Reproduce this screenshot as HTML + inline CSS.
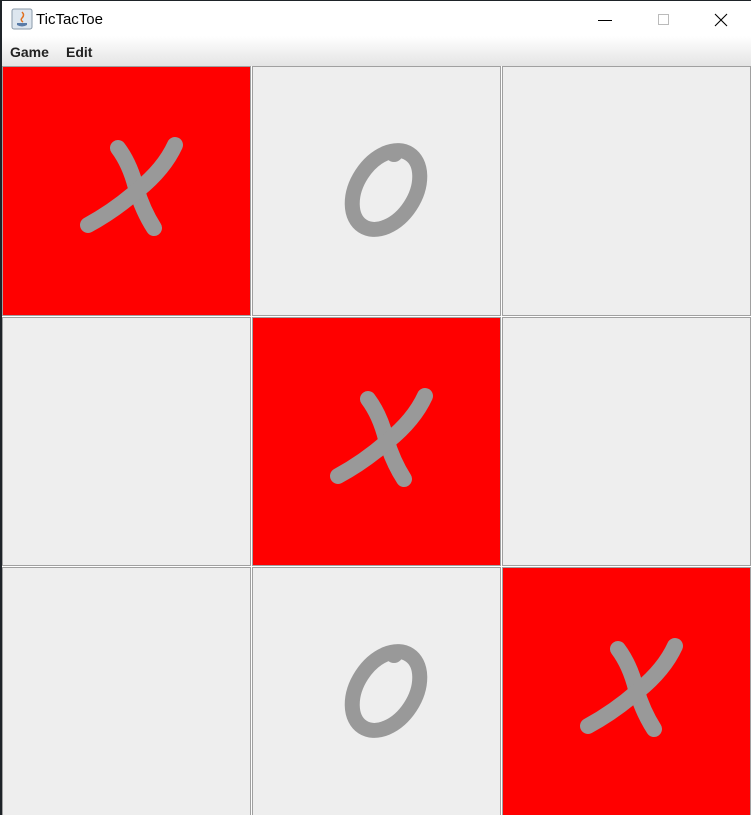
<!DOCTYPE html>
<html><head><meta charset="utf-8"><style>
html,body{margin:0;padding:0;width:751px;height:815px;overflow:hidden;background:#1e2328;font-family:"Liberation Sans",sans-serif}
#win{position:absolute;left:2px;top:1px;width:749px;height:814px;background:#fff}
#title{position:absolute;left:0;top:0;width:749px;height:35px;background:#fff}
#title .t{position:absolute;left:34px;top:10px;font-size:15px;color:#000}
#menu{position:absolute;left:0;top:35px;width:749px;height:30px;background:linear-gradient(#fff,#e4e4e4)}
#menu span{position:absolute;top:8px;font-size:14px;font-weight:bold;color:#222}
svg{position:absolute;left:0;top:0}
</style></head><body>
<div id="win">
<div id="title">
<svg width="24" height="24" style="left:9px;top:7px" viewBox="0 0 24 24"><rect x="1" y="1" width="20" height="20" rx="2" fill="#dde6ef" stroke="#8a9aaa"/><path d="M6 15 h10 v2 q-5 3 -10 0z" fill="#5a7ca8"/><path d="M11 4 q3 3 0 6 q-2 2 1 4" stroke="#e07020" stroke-width="1.5" fill="none"/></svg>
<span class="t">TicTacToe</span>
<svg width="749" height="35"><line x1="596" y1="19.5" x2="610" y2="19.5" stroke="#000"/><rect x="656.5" y="13.5" width="10" height="10" fill="none" stroke="#bbb"/><path d="M713 13 L725 25 M725 13 L713 25" stroke="#000" stroke-width="1.1"/></svg>
</div>
<div id="menu"><span style="left:8px">Game</span><span style="left:64px">Edit</span></div>
</div>
<svg width="751" height="815" style="top:0;left:0">
<defs>
<g id="X"><path d="M116 82 Q128 98 134 122 Q141 145 152 162" stroke="#999" stroke-width="16" stroke-linecap="round" fill="none"/><path d="M173 79 Q162 103 136 124 Q112 145 86 159" stroke="#999" stroke-width="16" stroke-linecap="round" fill="none"/></g>
<g id="O"><ellipse cx="134" cy="124" rx="29" ry="43" transform="rotate(33 134 124)" fill="none" stroke="#999" stroke-width="15"/><circle cx="142" cy="87" r="9" fill="#999"/></g>
</defs>
<g stroke="#a0a0a0" stroke-width="1">
<rect x="2.5" y="66.5" width="248" height="249" fill="#ff0000"/>
<rect x="252.5" y="66.5" width="248" height="249" fill="#eeeeee"/>
<rect x="502.5" y="66.5" width="248" height="249" fill="#eeeeee"/>
<rect x="2.5" y="317.5" width="248" height="248" fill="#eeeeee"/>
<rect x="252.5" y="317.5" width="248" height="248" fill="#ff0000"/>
<rect x="502.5" y="317.5" width="248" height="248" fill="#eeeeee"/>
<rect x="2.5" y="567.5" width="248" height="250" fill="#eeeeee"/>
<rect x="252.5" y="567.5" width="248" height="250" fill="#eeeeee"/>
<rect x="502.5" y="567.5" width="248" height="250" fill="#ff0000"/>
</g>
<use href="#X" x="2" y="66"/>
<use href="#O" x="252" y="66"/>
<use href="#X" x="252" y="317"/>
<use href="#O" x="252" y="567"/>
<use href="#X" x="502" y="567"/>
</svg>
</body></html>
